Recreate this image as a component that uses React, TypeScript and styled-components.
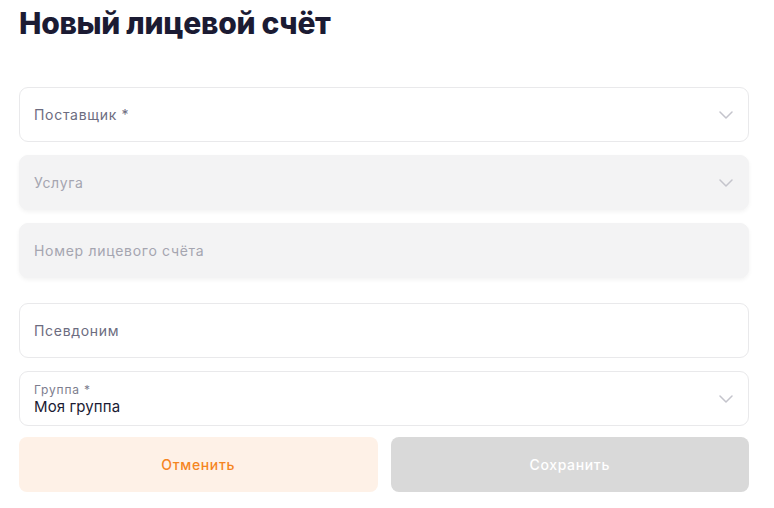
import React from "react";
import styled, { createGlobalStyle } from "styled-components";

const Global = createGlobalStyle`
  html, body { margin: 0; padding: 0; background: #fff; }
  body { font-family: Inter, "Noto Sans", sans-serif; }
`;

const Page = styled.div`
  width: 730px;
  padding: 0 25px 0 19px;
  display: flex;
  flex-direction: column;
`;

const Title = styled.h1`
  margin: 3px 0 0 0;
  font-size: 30px;
  line-height: 40px;
  font-weight: 800;
  color: #1b1b33;
  letter-spacing: -0.3px;
`;

const Form = styled.div`
  margin-top: 44px;
  display: flex;
  flex-direction: column;
`;

const Field = styled.div<{ $disabled?: boolean; $gapAfter?: number }>`
  height: 55px;
  box-sizing: border-box;
  border-radius: 9px;
  border: 1px solid ${(p) => (p.$disabled ? "#f3f3f4" : "#e9e9eb")};
  background: ${(p) => (p.$disabled ? "#f3f3f4" : "#fff")};
  box-shadow: ${(p) => (p.$disabled ? "0 2px 4px rgba(0,0,0,0.05)" : "none")};
  margin-bottom: ${(p) => p.$gapAfter ?? 13}px;
  display: flex;
  align-items: center;
  padding: 0 14px;
`;

const Texts = styled.div`
  flex: 1;
  display: flex;
  flex-direction: column;
`;

const Label = styled.span<{ $disabled?: boolean }>`
  font-size: 14px;
  letter-spacing: 0.7px;
  color: ${(p) => (p.$disabled ? "#a5a5b0" : "#6c6c80")};
`;

const SmallLabel = styled.span`
  font-size: 12px;
  line-height: 14px;
  letter-spacing: 0.8px;
  color: #7d7d8e;
  margin-top: 3px;
`;

const Value = styled.span`
  font-size: 15px;
  line-height: 20px;
  letter-spacing: 0.1px;
  color: #1b1b33;
`;

const Chevron = () => (
  <svg width="14" height="8" viewBox="0 0 14 8" fill="none">
    <path d="M1 1l6 6 6-6" stroke="#c4c4cc" strokeWidth="1.5" strokeLinecap="round" strokeLinejoin="round" />
  </svg>
);

const ChevronBox = styled.div`
  width: 14px;
  display: flex;
  margin-right: 1px;
`;

const Buttons = styled.div`
  display: grid;
  grid-template-columns: 1fr 1fr;
  gap: 13px;
`;

const Button = styled.button<{ $variant: "cancel" | "save" }>`
  height: 55px;
  border: none;
  border-radius: 8px;
  font-family: Inter, "Noto Sans", sans-serif;
  font-size: 14px;
  font-weight: 500;
  letter-spacing: 0.65px;
  background: ${(p) => (p.$variant === "cancel" ? "#fef1e7" : "#d9d9d9")};
  color: ${(p) => (p.$variant === "cancel" ? "#f5851f" : "#ffffff")};
  cursor: pointer;
`;

export default function App() {
  return (
    <Page>
      <Global />
      <Title>Новый лицевой счёт</Title>
      <Form>
        <Field>
          <Texts>
            <Label>Поставщик *</Label>
          </Texts>
          <ChevronBox><Chevron /></ChevronBox>
        </Field>
        <Field $disabled>
          <Texts>
            <Label $disabled>Услуга</Label>
          </Texts>
          <ChevronBox><Chevron /></ChevronBox>
        </Field>
        <Field $disabled $gapAfter={25}>
          <Texts>
            <Label $disabled>Номер лицевого счёта</Label>
          </Texts>
        </Field>
        <Field>
          <Texts>
            <Label>Псевдоним</Label>
          </Texts>
        </Field>
        <Field $gapAfter={11}>
          <Texts>
            <SmallLabel>Группа *</SmallLabel>
            <Value>Моя группа</Value>
          </Texts>
          <ChevronBox><Chevron /></ChevronBox>
        </Field>
        <Buttons>
          <Button $variant="cancel">Отменить</Button>
          <Button $variant="save">Сохранить</Button>
        </Buttons>
      </Form>
    </Page>
  );
}
